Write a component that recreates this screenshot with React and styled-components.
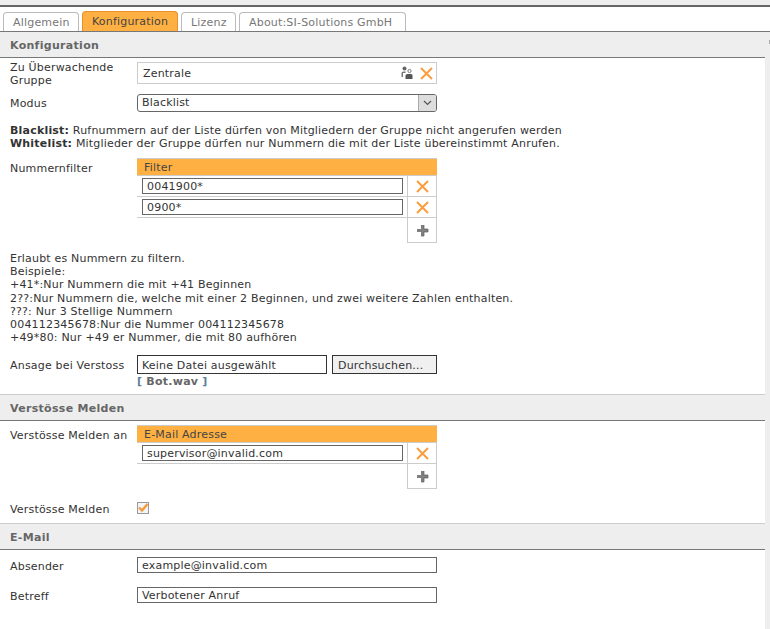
import React from 'react';
import styled, { createGlobalStyle } from 'styled-components';

const Global = createGlobalStyle`
  html, body { margin: 0; padding: 0; background: #fff; }
  body { font-family: "DejaVu Sans", Verdana, sans-serif; font-size: 11px; letter-spacing: 0.19px; color: #333; }
  b { letter-spacing: 0.2px; }
`;
const Page = styled.div`width: 770px; height: 629px; overflow: hidden; display: flex; flex-direction: column;`;
const TopBand = styled.div`height: 5px; flex: none; background: #eee; border-bottom: 2px solid #666;`;
const Tabs = styled.div`display: flex; flex: none; align-items: flex-end; gap: 3px; padding: 4px 0 0 3px; height: 20px; border-bottom: 1px solid #777;`;
const Tab = styled.div`
  width: ${p => p.$w}px; height: ${p => (p.$active ? 20 : 19)}px; box-sizing: border-box; padding-left: 9px;
  line-height: ${p => (p.$active ? 19 : 20)}px; white-space: nowrap;
  border: 1px solid ${p => (p.$active ? '#e8912a' : '#bbb')}; border-bottom: none;
  border-radius: 4px 4px 0 0;
  background: ${p => (p.$active ? '#ffb042' : '#fff')};
  color: ${p => (p.$active ? '#444' : '#777')};
`;
const Main = styled.div`display: flex; flex: 1; min-height: 0;`;
const Content = styled.div`width: 765px; flex: none;`;
const Rail = styled.div`width: 5px; flex: none; background: #eee; display: flex; justify-content: flex-end;`;
const RailTick = styled.div`width: 1px; height: 4px; margin-top: 8px; background: #aaa;`;
const SectionHead = styled.div`
  height: 25px; line-height: 27px; padding-left: 10px;
  background: #eee; font-weight: bold; letter-spacing: 0.3px; color: #666;
  margin-top: ${p => p.$mt || 0}px;
  border-top: ${p => (p.$top ? '1px solid #ccc' : 'none')};
  border-bottom: 1px solid #777;
`;
const Row = styled.div`display: flex; padding-left: 10px; margin-top: ${p => p.$mt || 0}px;`;
const Label = styled.div`width: 127px; flex: none; line-height: 13px; padding-top: ${p => p.$pt || 0}px;`;
const GroupBox = styled.div`
  width: 300px; height: 22px; margin-top: 1px; box-sizing: border-box; border: 1px solid #ccc;
  display: flex; align-items: center; padding: 0 3px 0 5px; gap: 7px;
`;
const GroupName = styled.span`flex: 1;`;
const Select = styled.div`
  width: 300px; height: 18px; box-sizing: border-box; border: 1px solid #666; border-radius: 3px;
  display: flex; align-items: center; padding-left: 4px; overflow: hidden;
`;
const SelectText = styled.span`flex: 1; line-height: 14px; margin-top: -1px;`;
const SelectArrow = styled.span`
  width: 17px; height: 16px; background: #ddd; border-left: 1px solid #aaa;
  display: flex; align-items: center; justify-content: center;
`;
const Note = styled.div`padding-left: 10px; line-height: 13px; margin-top: ${p => p.$mt || 0}px;`;
const Examples = styled(Note)`line-height: 13.2px;`;
const Table = styled.div`width: 300px; border-top: 1px solid #ccc; box-sizing: border-box;`;
const TableHead = styled.div`
  height: 17px; box-sizing: border-box; line-height: 18px; background: #ffb042; padding-left: 7px; color: #444;
  border-bottom: 1px solid #ccc;
`;
const TableRow = styled.div`display: flex; height: 21px; box-sizing: border-box; border-bottom: 1px solid #ccc;`;
const CellMain = styled.div`width: 271px; box-sizing: border-box; padding: 2px 4px 0 5px; border-right: 1px solid #ccc;`;
const CellInput = styled.div`
  height: 16px; box-sizing: border-box; border: 1px solid #666; padding-left: 4px; line-height: 15px; color: #333;
`;
const CellIcon = styled.div`width: 29px; box-sizing: border-box; display: flex; align-items: center; justify-content: center; border-right: 1px solid #ccc;`;
const AddRow = styled.div`display: flex; justify-content: flex-end;`;
const AddCell = styled.div`
  width: 30px; height: 25px; box-sizing: border-box; border: 1px solid #ccc; border-top: none;
  display: flex; align-items: center; justify-content: center;
`;
const FileRow = styled.div`display: flex; gap: 5px; width: 300px;`;
const FileBox = styled.div`
  width: 190px; height: 19px; box-sizing: border-box; border: 1px solid #333; line-height: 19px; padding-left: 4px;
`;
const FileButton = styled.div`
  width: 105px; height: 19px; box-sizing: border-box; border: 1px solid #333; background: #f0f0f0; line-height: 19px; padding-left: 5px;
`;
const Linked = styled.div`font-weight: bold; letter-spacing: 0.25px; color: #666; margin-top: 1px; line-height: 13px;`;
const Bracket = styled.span`color: #5b7f9a;`;
const CheckBox = styled.div`
  width: 12px; height: 12px; box-sizing: border-box; border: 1px solid #999; background: #f4f4f4;
  display: flex; align-items: center; justify-content: center;
`;
const TextField = styled.div`
  width: 300px; height: 16px; box-sizing: border-box; border: 1px solid #666; line-height: 15px; padding-left: 4px;
`;
const Field = styled.div`display: flex; flex-direction: column;`;

const Cross = () => (
  <svg width="13" height="13" viewBox="0 0 13 13"><path d="M1 1 L12 12 M12 1 L1 12" stroke="#fb9d3f" strokeWidth="2" fill="none" /></svg>
);
const Plus = () => (
  <svg width="13" height="13" viewBox="0 0 13 13"><path d="M5 1h3v4h4v3H8v4H5V8H1V5h4z" fill="#808080" /><path d="M8 1v4h4v3H8v4H5" stroke="#5e5e5e" strokeWidth=".7" fill="none" /></svg>
);
const Users = () => (
  <svg width="12" height="14" viewBox="0 0 12 14">
    <circle cx="3.500" cy="2.500" r="2" fill="#666" />
    <path d="M0.500 11V7q0-1.500 2-1.500h2V7H2v4z" fill="#777" />
    <circle cx="8.500" cy="5" r="1.600" fill="none" stroke="#777" />
    <path d="M4.500 13V9.500Q4.500 8 6.500 8h3.500q1.500 0 1.500 1.500V13z" fill="#555" />
  </svg>
);
const Chevron = () => (
  <svg width="9" height="6" viewBox="0 0 9 6"><path d="M1 1l3.500 3.500L8 1" stroke="#555" strokeWidth="1.200" fill="none" /></svg>
);
const Check = () => (
  <svg width="10" height="10" viewBox="0 0 10 10"><path d="M1 4.500l3 3L9.500 1" stroke="#f39a3c" strokeWidth="2.400" fill="none" /></svg>
);

const tabs = [
  { label: 'Allgemein', width: 76 },
  { label: 'Konfiguration', width: 96 },
  { label: 'Lizenz', width: 55 },
  { label: 'About:SI-Solutions GmbH', width: 167 },
];

const NumberTable = ({ head, rows }) => (
  <Table>
    <TableHead>{head}</TableHead>
    {rows.map(r => (
      <TableRow key={r}>
        <CellMain><CellInput>{r}</CellInput></CellMain>
        <CellIcon><Cross /></CellIcon>
      </TableRow>
    ))}
    <AddRow><AddCell><Plus /></AddCell></AddRow>
  </Table>
);

export default function App() {
  return (
    <Page>
      <Global />
      <TopBand />
      <Tabs>
        {tabs.map((t, i) => <Tab key={t.label} $w={t.width} $active={i === 1}>{t.label}</Tab>)}
      </Tabs>
      <Main>
        <Content>
          <SectionHead>Konfiguration</SectionHead>
          <Row $mt={3}>
            <Label>Zu Überwachende<br />Gruppe</Label>
            <GroupBox><GroupName>Zentrale</GroupName><Users /><Cross /></GroupBox>
          </Row>
          <Row $mt={7}>
            <Label $pt={3}>Modus</Label>
            <Select><SelectText>Blacklist</SelectText><SelectArrow><Chevron /></SelectArrow></Select>
          </Row>
          <Note $mt={12}>
            <b>Blacklist:</b> Rufnummern auf der Liste dürfen von Mitgliedern der Gruppe nicht angerufen werden<br />
            <b>Whitelist:</b> Mitglieder der Gruppe dürfen nur Nummern die mit der Liste übereinstimmt Anrufen.
          </Note>
          <Row $mt={8}>
            <Label $pt={4}>Nummernfilter</Label>
            <NumberTable head="Filter" rows={['0041900*', '0900*']} />
          </Row>
          <Examples $mt={9}>
            Erlaubt es Nummern zu filtern.<br />
            Beispiele:<br />
            +41*:Nur Nummern die mit +41 Beginnen<br />
            2??:Nur Nummern die, welche mit einer 2 Beginnen, und zwei weitere Zahlen enthalten.<br />
            ???: Nur 3 Stellige Nummern<br />
            004112345678:Nur die Nummer 004112345678<br />
            +49*80: Nur +49 er Nummer, die mit 80 aufhören
          </Examples>
          <Row $mt={11}>
            <Label $pt={4}>Ansage bei Verstoss</Label>
            <Field>
              <FileRow><FileBox>Keine Datei ausgewählt</FileBox><FileButton>Durchsuchen...</FileButton></FileRow>
              <Linked><Bracket>[</Bracket> Bot.wav <Bracket>]</Bracket></Linked>
            </Field>
          </Row>
          <SectionHead $top $mt={6}>Verstösse Melden</SectionHead>
          <Row $mt={4}>
            <Label $pt={4}>Verstösse Melden an</Label>
            <NumberTable head="E-Mail Adresse" rows={['supervisor@invalid.com']} />
          </Row>
          <Row $mt={13}>
            <Label $pt={1}>Verstösse Melden</Label>
            <CheckBox><Check /></CheckBox>
          </Row>
          <SectionHead $top $mt={7}>E-Mail</SectionHead>
          <Row $mt={7}>
            <Label $pt={3}>Absender</Label>
            <TextField>example@invalid.com</TextField>
          </Row>
          <Row $mt={14}>
            <Label $pt={3}>Betreff</Label>
            <TextField>Verbotener Anruf</TextField>
          </Row>
        </Content>
        <Rail><RailTick /></Rail>
      </Main>
    </Page>
  );
}
